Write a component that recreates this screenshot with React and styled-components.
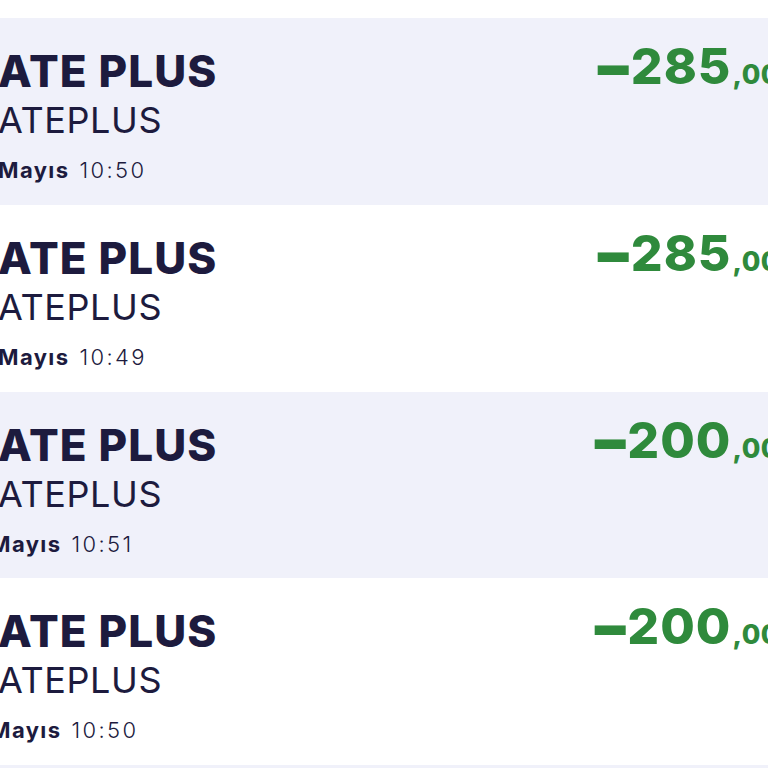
import React from "react";
import styled, { createGlobalStyle } from "styled-components";

const GlobalStyle = createGlobalStyle`
  html, body {
    margin: 0;
    padding: 0;
    background: #ffffff;
    overflow: hidden;
  }
  body {
    font-family: Inter, "Noto Sans", sans-serif;
    color: #1d1b3e;
  }
`;

const transactions = [
  { title: "ATE PLUS", merchant: "ATEPLUS", shift: 0, time: "10:50", amount: "285" },
  { title: "ATE PLUS", merchant: "ATEPLUS", shift: 0, time: "10:49", amount: "285" },
  { title: "ATE PLUS", merchant: "ATEPLUS", shift: -8, time: "10:51", amount: "200" },
  { title: "ATE PLUS", merchant: "ATEPLUS", shift: -8, time: "10:50", amount: "200" },
  { title: "ATE PLUS", merchant: "ATEPLUS", shift: 0, time: "10:48", amount: "150" },
];

const App = () => (
  <>
    <GlobalStyle />
    <Page>
      <List>
        {transactions.map((item, i) => (
          <Row key={i} $striped={i % 2 === 0}>
            <Info>
              <Title>{item.title}</Title>
              <Merchant>{item.merchant}</Merchant>
              <DateLine $shift={item.shift}>
                <Day>Mayıs</Day>
                <Time>{item.time}</Time>
              </DateLine>
            </Info>
            <Amount>
              <Sign>−</Sign>
              {item.amount}
              <Cents>,00</Cents>
            </Amount>
          </Row>
        ))}
      </List>
    </Page>
  </>
);

const Page = styled.div`
  padding-top: 18px;
  width: 768px;
  height: 768px;
  overflow: hidden;
`;

const List = styled.div`
  display: flex;
  flex-direction: column;
  margin-left: -2px;
  width: 812px;
`;

const Row = styled.div`
  display: flex;
  justify-content: space-between;
  align-items: flex-start;
  height: 186.75px;
  box-sizing: border-box;
  padding: 23px 30px 0 0;
  background: ${p => (p.$striped ? "#f0f1fa" : "#ffffff")};
`;

const Info = styled.div`
  display: flex;
  flex-direction: column;
  padding-top: 1px;
`;

const Title = styled.div`
  margin-top: 7px;
  font-size: 44px;
  line-height: 1;
  font-weight: 800;
  letter-spacing: 1.1px;
`;

const Merchant = styled.div`
  margin-top: 9px;
  font-size: 36px;
  line-height: 1;
  font-weight: 400;
  letter-spacing: 0.6px;
`;

const DateLine = styled.div`
  display: flex;
  gap: 10px;
  margin-top: 21px;
  margin-left: ${p => p.$shift}px;
  font-size: 22px;
  line-height: 1;
`;

const Day = styled.span`
  font-weight: 700;
  letter-spacing: 1.4px;
`;

const Time = styled.span`
  font-weight: 300;
  letter-spacing: 2.4px;
`;

const Amount = styled.div`
  display: flex;
  align-items: baseline;
  font-size: 50px;
  line-height: 1;
  font-weight: 800;
  color: #2f8a3c;
  letter-spacing: 1px;
`;

const Sign = styled.span`
  display: inline-block;
  margin-right: -1px;
  font-weight: 900;
  transform: scale(1.18, 1.2);
  transform-origin: center center;
`;

const Cents = styled.span`
  font-size: 27px;
  margin-left: 1px;
  letter-spacing: 0.5px;
`;

export default App;
